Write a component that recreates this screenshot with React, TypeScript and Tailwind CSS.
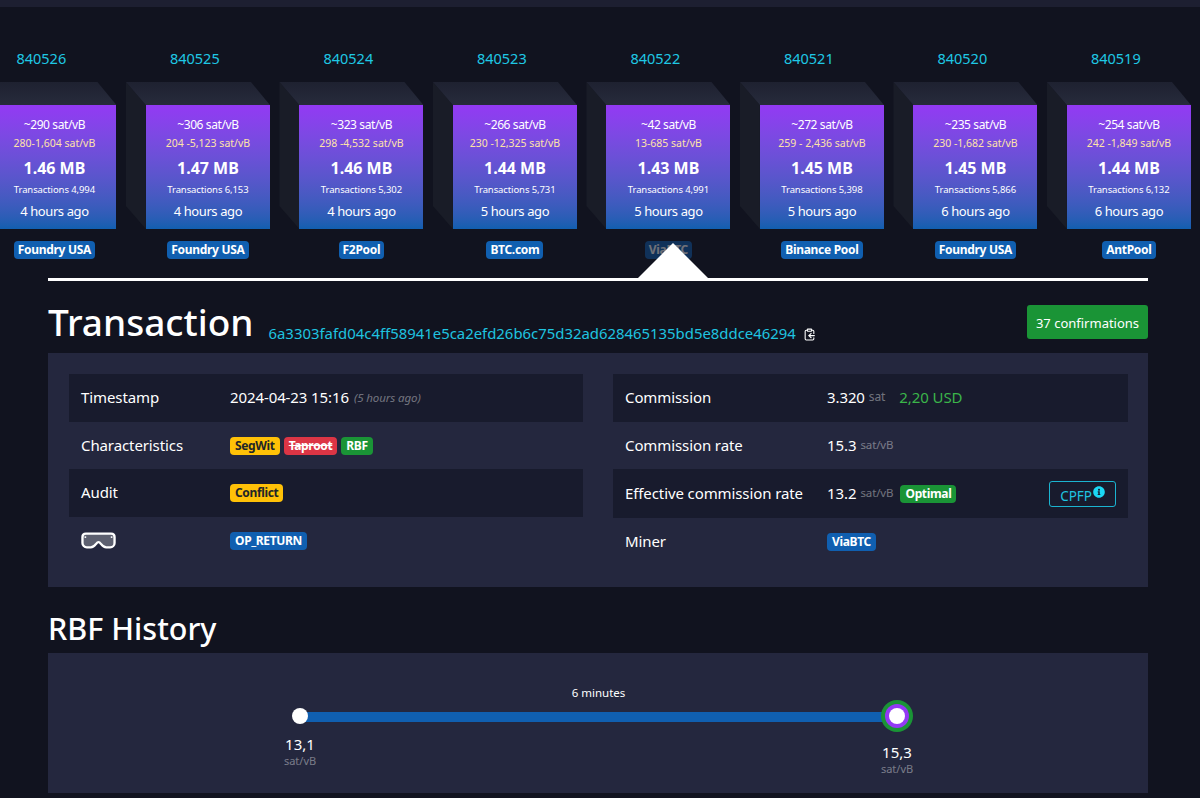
import { FaInfoCircle } from "react-icons/fa"
import { ClipboardCopy } from "lucide-react"

const blocks = [
  { height: 840526, fee: "~290 sat/vB", range: "280-1,604 sat/vB", size: "1.46 MB", txs: "4,994", age: "4 hours ago", miner: "Foundry USA" },
  { height: 840525, fee: "~306 sat/vB", range: "204 -5,123 sat/vB", size: "1.47 MB", txs: "6,153", age: "4 hours ago", miner: "Foundry USA" },
  { height: 840524, fee: "~323 sat/vB", range: "298 -4,532 sat/vB", size: "1.46 MB", txs: "5,302", age: "4 hours ago", miner: "F2Pool" },
  { height: 840523, fee: "~266 sat/vB", range: "230 -12,325 sat/vB", size: "1.44 MB", txs: "5,731", age: "5 hours ago", miner: "BTC.com" },
  { height: 840522, fee: "~42 sat/vB", range: "13-685 sat/vB", size: "1.43 MB", txs: "4,991", age: "5 hours ago", miner: "ViaBTC" },
  { height: 840521, fee: "~272 sat/vB", range: "259 - 2,436 sat/vB", size: "1.45 MB", txs: "5,398", age: "5 hours ago", miner: "Binance Pool" },
  { height: 840520, fee: "~235 sat/vB", range: "230 -1,682 sat/vB", size: "1.45 MB", txs: "5,866", age: "6 hours ago", miner: "Foundry USA" },
  { height: 840519, fee: "~254 sat/vB", range: "242 -1,849 sat/vB", size: "1.44 MB", txs: "6,132", age: "6 hours ago", miner: "AntPool" },
]

function Badge({ children, color }: { children: React.ReactNode; color: string }) {
  return <span className={`mt-[2px] inline-flex h-[18px] items-center rounded-[4px] px-[5px] text-[12px] font-bold leading-none tracking-[-0.35px] ${color}`}>{children}</span>
}

const blue = "bg-[#105fb0] text-white"
const yellow = "bg-[#ffc107] text-[#212529]"
const green = "bg-[#1a9436] text-white"

function Block({ block }: { block: (typeof blocks)[number] }) {
  const dimmed = block.miner === "ViaBTC"
  return (
    <div className="w-[153.5px] shrink-0">
      <div className="ml-[44px] text-[14.5px] leading-5 text-[#1fc8e4]">{block.height}</div>
      <div className="mt-[14px] flex">
        <div className="h-[147px] w-[20px] bg-[#191c27] [clip-path:polygon(0_0,100%_23px,100%_100%,0_124px)]" />
        <div className="w-[124px]">
          <div className="-ml-[20px] h-[23px] w-[144px] bg-gradient-to-b from-[#1e2130] to-[#272b3c] [clip-path:polygon(0_0,125px_0,100%_100%,20px_100%)]" />
          <div className="flex h-[124px] flex-col items-center bg-gradient-to-b from-[#9339f4] to-[#105fb0] pt-[11px] text-white">
            <div className="h-[18px] text-[12px] leading-[18px] tracking-[-0.4px]">{block.fee}</div>
            <div className="h-[19px] text-[10.5px] leading-[19px] text-[#ffe3a8]">{block.range}</div>
            <div className="mt-[3px] h-[24px] text-[16px] font-bold leading-[24px]">{block.size}</div>
            <div className="mt-[1px] h-[18px] text-[9.5px] leading-[18px] tracking-[-0.1px]">Transactions {block.txs}</div>
            <div className="mt-[2px] h-[20px] text-[13px] leading-[20px] tracking-[-0.4px]">{block.age}</div>
          </div>
          <div className="mt-[12px] flex justify-center">
            <span className={`inline-flex h-[18px] items-center rounded-[4px] bg-[#105fb0] px-[4px] text-[12px] font-bold leading-none tracking-[-0.3px] text-white ${dimmed ? "opacity-40" : ""}`}>
              {block.miner}
            </span>
          </div>
        </div>
      </div>
    </div>
  )
}

function Row({ label, shaded, tall, valueX, children }: { label: React.ReactNode; shaded?: boolean; tall?: boolean; valueX: string; children: React.ReactNode }) {
  return (
    <div className={`flex items-center px-[12px] pb-[1px] text-[15px] tracking-[-0.1px] text-white ${tall ? "h-[49px]" : "h-[47.5px]"} ${shaded ? "bg-[#181b2d]" : ""}`}>
      <div className={`shrink-0 ${valueX}`}>{label}</div>
      <div className="flex flex-1 items-center">{children}</div>
    </div>
  )
}

function Goggles() {
  return (
    <svg width="35" height="17" viewBox="0 0 36 17" className="mt-[2px] block">
      <path d="M5 1.500h26c2 0 3.500 1.500 3.500 3.500v6c0 2.500-2 4.500-4.500 4.500h-4c-2.500 0-4-1.500-5.500-3.500-.8-1-2-1.800-2.500-1.800s-1.700.8-2.500 1.800c-1.500 2-3 3.500-5.500 3.500H6c-2.500 0-4.500-2-4.500-4.500V5c0-2 1.500-3.500 3.500-3.500z" fill="#5d6070" stroke="#fff" strokeWidth="2.400" />
      <circle cx="4.500" cy="5" r="1" fill="#fff" />
      <circle cx="31.500" cy="5" r="1" fill="#fff" />
    </svg>
  )
}

export default function App() {
  return (
    <div className="h-[798px] w-full overflow-hidden bg-[#11131f] font-['Noto_Sans',sans-serif] text-white">
      <div className="h-[7px] bg-[#1d1f31]" />

      <div className="-ml-[27.6px] mt-[41px] flex">
        {blocks.map((block) => (
          <Block key={block.height} block={block} />
        ))}
      </div>

      <div className="ml-[48px] mr-[52px]">
        <div className="relative mt-[19px] h-[3px] bg-white">
          <div className="absolute bottom-full left-[590px] h-0 w-0 border-x-[35px] border-b-[35px] border-x-transparent border-b-white" />
        </div>

        <div className="mt-[21px] flex h-[51px] items-start justify-between">
          <div className="flex items-start">
            <h1 className="-mt-[2px] text-[37px] font-medium leading-[44px]">Transaction</h1>
            <span className="ml-[15px] mt-[20px] text-[14.900px] leading-[22px] text-[#1fc4e0]">6a3303fafd04c4ff58941e5ca2efd26b6c75d32ad628465135bd5e8ddce46294</span>
            <ClipboardCopy className="ml-[7px] mt-[26px] h-[13px] w-[13px] text-white" />
          </div>
          <div className="mt-[3px] flex h-[34px] w-[121px] items-center justify-center rounded-[3px] bg-[#1a9436] pt-[3px] text-[13px]">37 confirmations</div>
        </div>

        <div className="flex h-[234px] gap-[30px] bg-[#24273e] pl-[21px] pr-[20px] pt-[21px]">
          <div className="w-[514px]">
            <Row label="Timestamp" shaded valueX="w-[149px]">
              <span>2024-04-23 15:16</span>
              <span className="ml-[5px] text-[11.500px] italic text-white/40">(5 hours ago)</span>
            </Row>
            <Row label="Characteristics" valueX="w-[149px]">
              <div className="flex gap-[4px]">
                <Badge color={yellow}>SegWit</Badge>
                <Badge color="bg-[#dc3545] text-white"><span className="line-through">Taproot</span></Badge>
                <Badge color={green}>RBF</Badge>
              </div>
            </Row>
            <Row label="Audit" shaded valueX="w-[149px]">
              <Badge color={yellow}>Conflict</Badge>
            </Row>
            <Row label={<Goggles />} valueX="w-[149px]">
              <Badge color={blue}>OP_RETURN</Badge>
            </Row>
          </div>

          <div className="w-[515px]">
            <Row label="Commission" shaded valueX="w-[202px]">
              <span>3.320</span>
              <span className="ml-[4px] text-[12px] text-white/40">sat</span>
              <span className="ml-[14px] text-[#3bb54a]">2,20 USD</span>
            </Row>
            <Row label="Commission rate" valueX="w-[202px]">
              <span>15.3</span>
              <span className="ml-[4px] text-[11.500px] text-white/40">sat/vB</span>
            </Row>
            <Row label="Effective commission rate" shaded tall valueX="w-[202px]">
              <span>13.2</span>
              <span className="ml-[4px] text-[11.500px] text-white/40">sat/vB</span>
              <span className="ml-[7px] flex"><Badge color={green}>Optimal</Badge></span>
              <div className="ml-auto mt-[2px] flex h-[26px] w-[67px] items-center justify-center rounded-[3px] border border-[#1bb4d0] text-[13.500px] text-[#1fc4e0]">
                <span className="pt-[4px]">CPFP</span>
                <FaInfoCircle className="mb-[4px] ml-[1px] h-[12px] w-[12px] text-[#1bd8f4]" />
              </div>
            </Row>
            <Row label="Miner" valueX="w-[202px]">
              <Badge color={blue}>ViaBTC</Badge>
            </Row>
          </div>
        </div>

        <h2 className="mt-[21px] h-[45px] text-[30.500px] font-medium leading-[40px]">RBF History</h2>

        <div className="flex h-[140px] items-start bg-[#24273e] pl-[220px] pt-[32px]">
          <div className="relative z-10 flex w-[64px] flex-col items-center pt-[23px]">
            <div className="h-[16px] w-[16px] rounded-full bg-white" />
            <div className="mt-[10px] text-[15px] leading-[20px]">13,1</div>
            <div className="text-[11px] leading-[14px] text-white/40">sat/vB</div>
          </div>
          <div className="-mx-[32px] w-[597px]">
            <div className="h-[16px] text-center text-[11.500px] leading-[16px]">6 minutes</div>
            <div className="mt-[11px] h-[10px] bg-[#105fb0]" />
          </div>
          <div className="relative z-10 flex w-[64px] flex-col items-center pt-[15px]">
            <div className="flex h-[32px] w-[32px] items-center justify-center rounded-full bg-[#1a9436]">
              <div className="flex h-[24px] w-[24px] items-center justify-center rounded-full bg-[#9339f4]">
                <div className="h-[16px] w-[16px] rounded-full bg-white" />
              </div>
            </div>
            <div className="mt-[10px] text-[15px] leading-[20px]">15,3</div>
            <div className="text-[11px] leading-[14px] text-white/40">sat/vB</div>
          </div>
        </div>
      </div>
    </div>
  )
}
